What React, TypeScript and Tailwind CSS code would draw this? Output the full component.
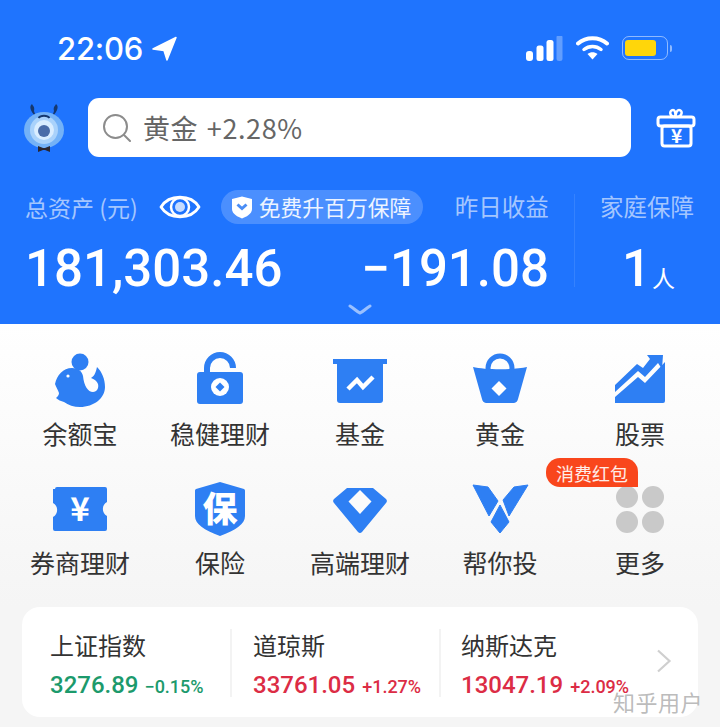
const cjk = { fontFamily: '"Noto Sans CJK SC", "Noto Sans", sans-serif' };
const num = { fontFamily: 'Roboto, "Noto Sans CJK SC", sans-serif' };
const blue = '#2e7ff3';

function StatusBar() {
  return (
    <div className="flex h-[36px] items-center justify-between pl-[57px] pr-[48px]">
      <div className="flex items-center gap-[9px]">
        <span className="text-[31px] font-medium leading-none tracking-[-0.2px] text-white" style={{ fontFamily: 'Inter, sans-serif' }}>22:06</span>
        <svg width="25" height="25" viewBox="0 0 25 25"><path d="M1 13 L24 1.500 L15 24 L12 14.500 Z" fill="#fff" stroke="#fff" strokeWidth="1.500" strokeLinejoin="round" /></svg>
      </div>
      <div className="flex items-center">
        <svg width="37" height="25" viewBox="0 0 37 25">
          <rect x="0" y="15" width="7" height="10" rx="3" fill="#fff" />
          <rect x="10.500" y="9.500" width="7" height="15.500" rx="2.500" fill="#fff" />
          <rect x="20.500" y="4" width="7" height="21" rx="2.500" fill="#fff" />
          <rect x="30.500" y="-1" width="6" height="26" rx="2.500" fill="#fff" fillOpacity="0.3" />
        </svg>
        <svg className="ml-[13px]" width="33" height="26" viewBox="0 0 33 26" fill="none">
          <path d="M2 8.500 C10 1.500 23 1.500 31 8.500" stroke="#fff" strokeWidth="4" strokeLinecap="round" />
          <path d="M8 14.500 C13 10.500 20 10.500 25 14.500" stroke="#fff" strokeWidth="3.500" strokeLinecap="round" />
          <path d="M11.500 19 C14.500 16.500 18.500 16.500 21.500 19 L16.500 24.500 Z" fill="#fff" />
        </svg>
        <div className="ml-[13px] flex items-center">
          <div className="flex h-[24px] w-[46px] items-center rounded-[7px] border border-white/50 p-[2px]">
            <div className="h-[16px] w-[31px] rounded-[3px] bg-[#ffd60a]" />
          </div>
          <div className="ml-[2px] h-[7px] w-[2px] rounded-r-full bg-white/50" />
        </div>
      </div>
    </div>
  );
}

function Logo() {
  return (
    <svg width="40" height="50" viewBox="0 0 40 50">
      <path d="M10 8 C11 4 9 3 8 1 C5 3 6 8 12 14" fill="#15386f" />
      <path d="M30 8 C29 4 31 3 32 1 C35 3 34 8 28 14" fill="#15386f" />
      <ellipse cx="20" cy="27" rx="20" ry="18" fill="#74b2f7" />
      <circle cx="20" cy="27" r="14" fill="#a9d2fb" />
      <circle cx="20" cy="27" r="10" fill="#d9edff" />
      <circle cx="20" cy="28" r="6" fill="#4a6ca8" />
      <path d="M14.500 15 C16.500 12 23.500 12 25.500 15" stroke="#15386f" strokeWidth="1.800" fill="none" />
      <path d="M14 43 L19 45 L21 45 L26 43 L26 49 L21 47 L19 47 L14 49 Z" fill="#2a2630" />
    </svg>
  );
}

function Gift() {
  return (
    <svg width="40" height="40" viewBox="0 0 40 40" fill="none" stroke="#fff" strokeWidth="3" strokeLinejoin="round">
      <rect x="2" y="9" width="36" height="9" rx="2.500" />
      <rect x="6" y="18" width="29" height="20" rx="2.500" />
      <path d="M19.500 9 C13 9 13 2 17 2 C19 2 19.500 5 19.500 9 C19.500 5 21 2 23 2 C27 2 27 9 19.500 9 Z" strokeWidth="2.500" />
      <text x="20.500" y="35" textAnchor="middle" fontSize="19" fontWeight="700" fill="#fff" stroke="none" style={cjk}>¥</text>
    </svg>
  );
}

function SearchRow() {
  return (
    <div className="mt-[32px] flex items-center pl-[24px]">
      <Logo />
      <div className="ml-[24px] flex h-[59px] w-[543px] items-center rounded-[11px] bg-white pl-[15px]">
        <svg width="28" height="28" viewBox="0 0 28 28" fill="none" stroke="#8c8c8c" strokeWidth="2">
          <circle cx="12.500" cy="12.500" r="11.500" />
          <path d="M21 21 L27 27" strokeLinecap="round" />
        </svg>
        <span className="ml-[12px] text-[27px] leading-none tracking-[0.6px] text-[#666] [word-spacing:2px]" style={cjk}>黄金 +2.28%</span>
      </div>
      <div className="ml-[25px]"><Gift /></div>
    </div>
  );
}

function Shield() {
  return (
    <svg width="22" height="23" viewBox="0 0 22 23">
      <path d="M1 3 L11 0.500 L21 3 V13 C21 18 15 21 11 22.500 C7 21 1 18 1 13 Z" fill="#fff" />
      <path d="M6.500 8.500 L11 12.500 L15.500 8.500" stroke="#4a8df5" strokeWidth="3" fill="none" />
    </svg>
  );
}

function Summary() {
  return (
    <div className="relative mt-[32px] flex h-[133px] pl-[25px]">
      <div className="w-[524px]">
        <div className="flex h-[36px] items-center" style={cjk}>
          <span className="text-[23px] leading-none text-white/60">总资产 (元)</span>
          <svg className="ml-[21px]" width="42" height="32" viewBox="0 0 42 32" fill="none">
            <path d="M2 16 C10 3 32 3 40 16 C32 29 10 29 2 16 Z" stroke="#fff" strokeWidth="2.800" strokeLinejoin="round" />
            <circle cx="21" cy="16" r="9" stroke="#fff" strokeWidth="2.500" />
            <circle cx="21" cy="16" r="5" fill="#fff" fillOpacity="0.75" />
          </svg>
          <div className="ml-[20px] flex h-[34px] w-[202px] items-center rounded-full bg-white/20 pl-[10px]">
            <Shield />
            <span className="ml-[6px] text-[21.800px] leading-none text-white/90">免费升百万保障</span>
          </div>
          <span className="ml-[32px] text-[23.500px] leading-none text-white/60">昨日收益</span>
        </div>
        <div className="mt-[19px] flex items-center justify-between leading-none text-white" style={num}>
          <span className="text-[51px] font-medium leading-[50px]">181,303.46</span>
          <span className="text-[51px] font-medium leading-[50px]">−191.08</span>
        </div>
      </div>
      <div className="ml-[25px] mt-[5px] h-[93px] w-px bg-white/10" />
      <div className="ml-[25px]">
        <div className="flex h-[36px] items-center text-[23.500px] leading-none text-white/60" style={cjk}>家庭保障</div>
        <div className="mt-[19px] flex items-end pl-[22px] text-white">
          <span className="text-[51px] font-medium leading-[50px]" style={num}>1</span>
          <span className="mb-[5px] ml-[1px] text-[23px] leading-none" style={cjk}>人</span>
        </div>
      </div>
      <svg className="absolute bottom-[7px] left-[348px]" width="24" height="11" viewBox="0 0 24 11" fill="none">
        <path d="M2 2 C7 5 9 8 12 9 C15 8 17 5 22 2" stroke="#fff" strokeOpacity="0.55" strokeWidth="3" strokeLinecap="round" />
      </svg>
    </div>
  );
}

const icons: Record<string, React.ReactNode> = {
  yeb: (
    <>
      <circle cx="30" cy="12" r="8.500" fill={blue} />
      <path d="M5 34 C7 25 13 18 22 18 C28 18 32 21 33 26 C34 36 38 42 43 42 C47 42 49 38 48 34 C47 31 44 29 41 28 C45 26 46 21 47 17 C52 22 55 29 55 37 C55 48 44 57 30 57 C24 57 18 55 14 52 C11 51 8 50 6 48 C8 46 9 45 9 43 C8 40 6 37 5 34 Z" fill={blue} />
      <circle cx="18" cy="26" r="1.600" fill="#fff" />
    </>
  ),
  lock: (
    <>
      <path d="M17 22 V18 A13 13 0 0 1 43 18" stroke={blue} strokeWidth="6" fill="none" />
      <rect x="7" y="22" width="46" height="32" rx="3" fill={blue} />
      <circle cx="30" cy="37" r="9" fill="#fff" />
      <path d="M30 32.500 L34.500 37 L30 41.500 L25.500 37 Z" fill={blue} />
    </>
  ),
  fund: (
    <>
      <rect x="3" y="9" width="54" height="5" fill={blue} />
      <path d="M7 13 H53 V50 A3 3 0 0 1 50 53 H10 A3 3 0 0 1 7 50 Z" fill={blue} />
      <path d="M18 39 L27 30 L33 37 L43 27" stroke="#fff" strokeWidth="4.500" fill="none" />
    </>
  ),
  bag: (
    <>
      <circle cx="30" cy="18" r="12" stroke={blue} strokeWidth="5" fill="none" />
      <path d="M3 17 C15 20 45 20 57 17 L48 49 A5 5 0 0 1 44 53 H16 A5 5 0 0 1 12 49 Z" fill={blue} />
      <path d="M29 31 L36.500 38.500 L29 46 L21.500 38.500 Z" fill="#fff" />
    </>
  ),
  stock: (
    <>
      <path d="M5 53 V47 L28 27 L35 33 L55 12 V51 A2 2 0 0 1 53 53 Z" fill={blue} />
      <path d="M5 35 V42 L28 21 L35 27 L48 13 L52 19 L53 5 H37 L40 9 L33 18 L27 14 Z" fill={blue} />
    </>
  ),
  ticket: (
    <>
      <path d="M5 10 A2 2 0 0 1 7 8 H55 A2 2 0 0 1 57 10 V23 A8 8 0 0 0 57 37 V50 A2 2 0 0 1 55 52 H5 A2 2 0 0 1 3 50 V38 A8 8 0 0 0 3 24 V10 Z" fill={blue} />
      <text x="30" y="42" textAnchor="middle" fontSize="33" fontWeight="700" fill="#fff" style={cjk}>¥</text>
    </>
  ),
  shield: (
    <>
      <path d="M30 3 L54 10 A2 2 0 0 1 55 12 V37 C55 45 46 51 30 57 C14 51 5 45 5 37 V12 A2 2 0 0 1 6 10 Z" fill={blue} />
      <text x="30" y="43" textAnchor="middle" fontSize="35" fontWeight="900" fill="#fff" style={cjk}>保</text>
    </>
  ),
  gem: (
    <>
      <path d="M17 9 H43 L56 20 A3 3 0 0 1 56 24 L32 53 A3 3 0 0 1 28 53 L4 24 A3 3 0 0 1 4 20 Z" fill={blue} />
      <path d="M30 11 L41.500 22.500 L30 35 L18.500 22.500 Z" fill="#fbfbfb" />
    </>
  ),
  v: (
    <g stroke={blue} strokeWidth="1" strokeLinejoin="round" fill={blue}>
      <path d="M3 6 L18 8 L28 22 L19 37 Z" />
      <path d="M58 6 L44 8 L33 21 L39 37 Z" />
      <path d="M30 26 L39 43 L30 54 L21 43 Z" />
    </g>
  ),
  more: (
    <>
      <circle cx="17" cy="18" r="11" fill="#c9c9c9" />
      <circle cx="43" cy="18" r="11" fill="#c9c9c9" />
      <circle cx="17" cy="43" r="11" fill="#c9c9c9" />
      <circle cx="43" cy="43" r="11" fill="#c9c9c9" />
    </>
  ),
};

const tiles = [
  { key: 'yeb', label: '余额宝' },
  { key: 'lock', label: '稳健理财' },
  { key: 'fund', label: '基金' },
  { key: 'bag', label: '黄金' },
  { key: 'stock', label: '股票' },
  { key: 'ticket', label: '券商理财' },
  { key: 'shield', label: '保险' },
  { key: 'gem', label: '高端理财' },
  { key: 'v', label: '帮你投' },
  { key: 'more', label: '更多' },
];

function Tile({ item }: { item: { key: string; label: string } }) {
  return (
    <div className="relative flex h-[128px] flex-col items-center">
      <svg width="60" height="60" viewBox="0 0 60 60">{icons[item.key]}</svg>
      <span className="mt-[7px] text-[25px] leading-[32px] text-[#333]" style={cjk}>{item.label}</span>
      {item.key === 'more' && (
        <div className="absolute left-[-24px] top-[-21px] flex h-[29px] w-[92px] items-center justify-center rounded-t-[14px] rounded-bl-[14px] bg-[#f9461c] text-[18px] leading-none text-white/90" style={cjk}>
          消费红包
        </div>
      )}
    </div>
  );
}

const indexes = [
  { name: '上证指数', value: '3276.89', change: '−0.15%', color: 'text-[#1c9a6c]', width: 'w-[210px] pl-[28px]', gap: 'ml-[6px]' },
  { name: '道琼斯', value: '33761.05', change: '+1.27%', color: 'text-[#dc2c45]', width: 'w-[209px] pl-[21px]', gap: 'ml-[7px]' },
  { name: '纳斯达克', value: '13047.19', change: '+2.09%', color: 'text-[#dc2c45]', width: 'flex-1 pl-[20px]', gap: 'ml-[7px]' },
];

function Indexes() {
  return (
    <div className="relative mx-[22px] flex h-[110px] rounded-[18px] bg-white pt-[22px]">
      {indexes.map((item, i) => (
        <div key={item.name} className={`${item.width} h-[68px] ${i < 2 ? 'border-r-2 border-[#f3f3f3]' : ''}`}>
          <div className="text-[24px] leading-[32px] text-[#333]" style={cjk}>{item.name}</div>
          <div className="mt-[9px] flex items-baseline whitespace-nowrap" style={num}>
            <span className={`text-[24px] font-medium leading-[30px] ${item.color}`}>{item.value}</span>
            <span className={`${item.gap} text-[18px] font-medium leading-none ${item.color}`}>{item.change}</span>
          </div>
        </div>
      ))}
      <svg className="absolute right-[26px] top-[42px]" width="16" height="24" viewBox="0 0 16 24" fill="none">
        <path d="M2 1.500 L13.500 12 L2 22.500" stroke="#cfcfcf" strokeWidth="2.200" />
      </svg>
      <span className="absolute bottom-[1px] right-[-5px] text-[22px] leading-[30px] tracking-[0.5px] text-[#aaa]/80" style={cjk}>知乎用户</span>
    </div>
  );
}

export default function App() {
  return (
    <div className="h-[727px] w-[720px] overflow-hidden bg-[#f5f5f5]">
      <div className="h-[324px] bg-[#1f74fe] pt-[30px]">
        <StatusBar />
        <SearchRow />
        <Summary />
      </div>
      <div className="bg-gradient-to-b from-white to-[#f5f5f5] px-[10px] pt-[26px]">
        <div className="grid grid-cols-5 gap-y-[1px]">
          {tiles.map(t => <Tile key={t.key} item={t} />)}
        </div>
      </div>
      <Indexes />
    </div>
  );
}
